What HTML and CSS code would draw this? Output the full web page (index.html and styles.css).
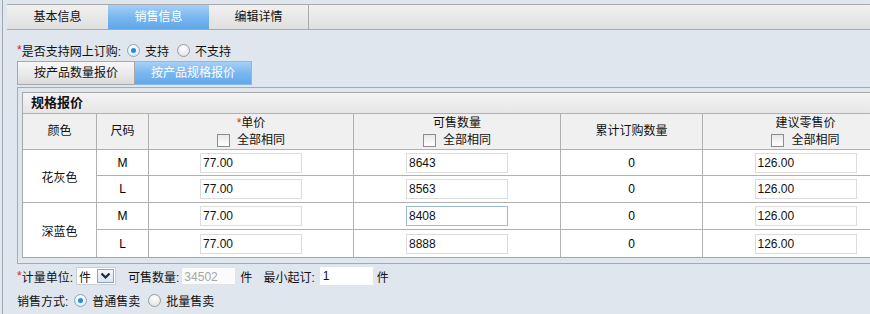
FILE: index.html
```html
<!DOCTYPE html>
<html>
<head>
<meta charset="utf-8">
<link rel="stylesheet" href="styles.css">
</head>
<body>
<div class="page">
  <div class="tabbar">
    <div class="tab">基本信息</div>
    <div class="tab active">销售信息</div>
    <div class="tab last">编辑详情</div>
  </div>
  <div class="content">
    <div class="line first">
      <span class="req">*</span>是否支持网上订购:
      <span class="radio checked"></span><span class="lbl">支持</span>
      <span class="radio"></span><span class="lbl">不支持</span>
    </div>
    <div class="subtabs">
      <div class="subtab">按产品数量报价</div>
      <div class="subtab active">按产品规格报价</div>
    </div>
    <div class="box">
      <div class="panel">
        <div class="panel-title">规格报价</div>
        <table class="grid">
          <colgroup>
            <col class="c1"><col class="c2"><col class="c3"><col class="c4"><col class="c5"><col class="c6">
          </colgroup>
          <thead>
            <tr>
              <th>颜色</th>
              <th>尺码</th>
              <th><div><span class="req">*</span>单价</div><div class="same"><span class="check"></span>全部相同</div></th>
              <th><div>可售数量</div><div class="same"><span class="check"></span>全部相同</div></th>
              <th>累计订购数量</th>
              <th><div>建议零售价</div><div class="same"><span class="check"></span>全部相同</div></th>
            </tr>
          </thead>
          <tbody>
            <tr class="r1">
              <td rowspan="2" class="color">花灰色</td>
              <td class="size">M</td>
              <td><span class="inp">77.00</span></td>
              <td><span class="inp">8643</span></td>
              <td class="num">0</td>
              <td><span class="inp">126.00</span></td>
            </tr>
            <tr>
              <td class="size">L</td>
              <td><span class="inp">77.00</span></td>
              <td><span class="inp">8563</span></td>
              <td class="num">0</td>
              <td><span class="inp">126.00</span></td>
            </tr>
            <tr>
              <td rowspan="2" class="color noline">深蓝色</td>
              <td class="size">M</td>
              <td><span class="inp">77.00</span></td>
              <td><span class="inp focus">8408</span></td>
              <td class="num">0</td>
              <td><span class="inp">126.00</span></td>
            </tr>
            <tr class="lastrow">
              <td class="size">L</td>
              <td><span class="inp">77.00</span></td>
              <td><span class="inp">8888</span></td>
              <td class="num">0</td>
              <td><span class="inp">126.00</span></td>
            </tr>
          </tbody>
        </table>
      </div>
    </div>
    <div class="line unit">
      <span class="req">*</span>计量单位:
      <span class="select"><span class="sel-val">件</span><span class="sel-btn"><svg width="11" height="8" viewBox="0 0 11 8"><path d="M1.5 1.5 L5.5 5.5 L9.5 1.5" fill="none" stroke="#1a2a40" stroke-width="2.2"/></svg></span></span>
      <span class="lab2">可售数量:</span>
      <span class="tinp disabled">34502</span>
      <span class="unitlbl">件</span>
      <span class="lab3">最小起订:</span>
      <span class="tinp small">1</span>
      <span class="unitlbl">件</span>
    </div>
    <div class="line">
      销售方式:
      <span class="radio checked"></span><span class="lbl">普通售卖</span>
      <span class="radio"></span><span class="lbl">批量售卖</span>
    </div>
  </div>
</div>
</body>
</html>
```

FILE: styles.css
```css
html, body {
  margin: 0;
  padding: 0;
}
body {
  background: #dfe6ee;
  font-family: "Liberation Sans", "Noto Sans CJK SC", sans-serif;
  font-size: 12px;
  color: #111;
  overflow: hidden;
  width: 870px;
  height: 314px;
}
.page {
  margin-left: 2px;
  border-left: 1px solid #a3a9b0;
  padding-left: 4px;
  padding-top: 4px;
  height: 314px;
  box-sizing: border-box;
  overflow: hidden;
}
.tabbar {
  display: flex;
  height: 24px;
  border-top: 1px solid #a9a9a9;
  border-bottom: 1px solid #a9a9a9;
  background: linear-gradient(#f1f1f1, #e6e6e6 60%, #e0e0e0);
  width: 900px;
}
.tab {
  width: 101px;
  line-height: 24px;
  text-align: center;
  color: #111;
}
.tab.last {
  border-right: 1px solid #a9a9a9;
  width: 99px;
}
.tab.active {
  background: linear-gradient(#a7d0f6, #7ab7f0 50%, #60a6ea);
  color: #fff;
}
.content {
  padding-left: 10px;
  padding-top: 10px;
}
.line {
  display: flex;
  align-items: center;
  height: 24px;
  white-space: nowrap;
}
.line.first {
  height: 20px;
}
.req {
  color: #d22;
}
.radio {
  display: inline-block;
  width: 11px;
  height: 11px;
  border-radius: 50%;
  border: 1px solid #9a9a9a;
  background: radial-gradient(circle at 50% 30%, #ffffff, #dedede);
  margin: 0 5px 0 6px;
  position: relative;
  box-sizing: content-box;
}
.radio.checked {
  border-color: #8aa5bd;
  background: radial-gradient(circle at 50% 30%, #ffffff, #dfe8f0);
}
.radio.checked::after {
  content: "";
  position: absolute;
  left: 3px;
  top: 3px;
  width: 5px;
  height: 5px;
  border-radius: 50%;
  background: #1e8fe0;
}
.subtabs {
  display: flex;
  margin-top: 1px;
  height: 24px;
}
.subtab {
  width: 116px;
  line-height: 22px;
  text-align: center;
  border: 1px solid #a8a8a8;
  background: linear-gradient(#f7f7f7, #e8e8e8 60%, #dadada);
}
.subtab.active {
  border-color: #8ab8e8;
  border-left: 0;
  background: linear-gradient(#a7d0f6, #7ab7f0 50%, #62a8ec);
  color: #fff;
}
.box {
  margin-top: 2px;
  border: 1px solid #a1acb8;
  border-right: 0;
  padding: 4px 0 5px 4px;
  width: 900px;
}
.panel {
  border: 1px solid #a7a7a7;
  border-right: 0;
  background: #fff;
}
.panel-title {
  height: 20px;
  line-height: 20px;
  padding-left: 8px;
  font-weight: bold;
  font-size: 13px;
  background: linear-gradient(#f4f4f4, #e6e6e6);
  border-bottom: 1px solid #b0b0b0;
}
.grid {
  table-layout: fixed;
  border-collapse: separate;
  border-spacing: 0;
  width: 886px;
}
.c1 { width: 74px; }
.c2 { width: 52px; }
.c3 { width: 205px; }
.c4 { width: 207px; }
.c5 { width: 142px; }
.c6 { width: 206px; }
.grid th, .grid td {
  border-right: 1px solid #b0b0b0;
  border-bottom: 1px solid #b0b0b0;
  padding: 0;
  text-align: center;
  box-sizing: border-box;
}
.grid th {
  height: 36px;
  font-weight: normal;
  background: #f0f0f0;
  line-height: 17px;
}
.grid td {
  height: 27px;
}
.grid .r1 td {
  height: 26px;
}
.grid .r1 td.color {
  height: 53px;
}
.grid .lastrow td, .grid td.noline {
  border-bottom: 0;
}
.same {
  display: flex;
  justify-content: center;
  align-items: center;
}
.check {
  display: inline-block;
  width: 11px;
  height: 11px;
  border: 1px solid #8c8c8c;
  background: linear-gradient(#e8e8e8, #ffffff);
  margin-right: 7px;
}
.size, .num {
  color: #000;
}
.color {
  color: #111;
}
.inp {
  display: inline-block;
  width: 102px;
  height: 20px;
  line-height: 18px;
  box-sizing: border-box;
  border: 1px solid #dcdcdc;
  text-align: left;
  padding-left: 2px;
  vertical-align: middle;
  background: #fff;
}
.inp.focus {
  border-color: #9dbdd8;
}
.select {
  display: inline-flex;
  width: 40px;
  height: 18px;
  margin-left: 3px;
  background: #fff;
  border: 1px solid #c8cfd6;
  box-sizing: border-box;
  align-items: center;
}
.sel-val {
  flex: 1;
  padding-left: 2px;
}
.sel-btn {
  width: 17px;
  height: 14px;
  margin-right: 1px;
  border: 1px solid #8fa6c0;
  background: linear-gradient(#f4f7fb, #dbe4ee);
  box-sizing: border-box;
  display: flex;
  align-items: center;
  justify-content: center;
}
.lab2 {
  margin-left: 12px;
}
.tinp {
  display: inline-block;
  height: 18px;
  line-height: 18px;
  box-sizing: border-box;
  background: #fff;
  padding-left: 2px;
  margin-left: 2px;
}
.tinp.disabled {
  width: 55px;
  color: #a6a6a6;
  border: 1px solid #e3e3e3;
  background: #fbfbfb;
}
.tinp.small {
  width: 53px;
  margin-left: 5px;
  padding-left: 3px;
}
.unitlbl {
  margin-left: 4px;
}
.lab3 {
  margin-left: 11px;
}
.lbl {
  margin-right: 2px;
}
```
